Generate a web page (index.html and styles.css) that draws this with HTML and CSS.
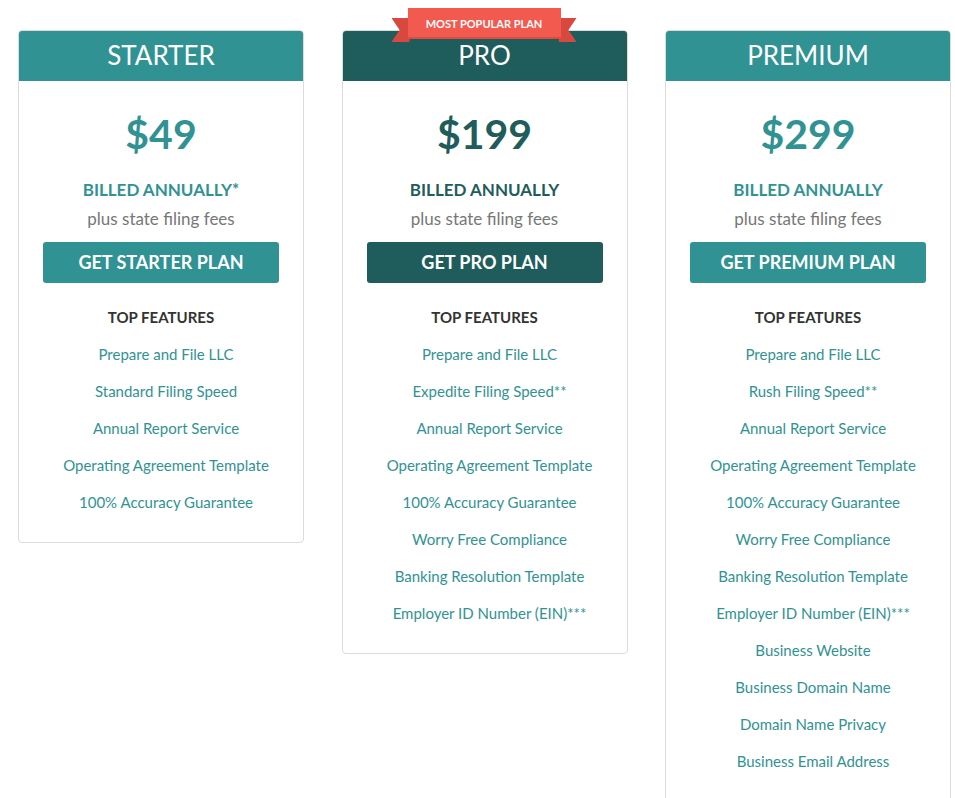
FILE: index.html
```html
<!DOCTYPE html>
<html>
<head>
<meta charset="utf-8">
<link rel="stylesheet" href="styles.css">
</head>
<body>
<div class="plans">
  <div class="card">
    <div class="card-head starter">STARTER</div>
    <div class="card-body">
      <div class="price teal">$49</div>
      <div class="billed teal">BILLED ANNUALLY*</div>
      <div class="fees">plus state filing fees</div>
      <a class="btn btn-teal">GET STARTER PLAN</a>
      <div class="top">TOP FEATURES</div>
      <ul class="features">
        <li>Prepare and File LLC</li>
        <li>Standard Filing Speed</li>
        <li>Annual Report Service</li>
        <li>Operating Agreement Template</li>
        <li>100% Accuracy Guarantee</li>
      </ul>
    </div>
  </div>
  <div class="card popular">
    <div class="ribbon">
      <span class="tail tail-left"></span>
      <span class="tail tail-right"></span>
      <span class="ribbon-main">MOST POPULAR PLAN</span>
    </div>
    <div class="card-head pro">PRO</div>
    <div class="card-body">
      <div class="price dark">$199</div>
      <div class="billed dark">BILLED ANNUALLY</div>
      <div class="fees">plus state filing fees</div>
      <a class="btn btn-dark">GET PRO PLAN</a>
      <div class="top">TOP FEATURES</div>
      <ul class="features">
        <li>Prepare and File LLC</li>
        <li>Expedite Filing Speed**</li>
        <li>Annual Report Service</li>
        <li>Operating Agreement Template</li>
        <li>100% Accuracy Guarantee</li>
        <li>Worry Free Compliance</li>
        <li>Banking Resolution Template</li>
        <li>Employer ID Number (EIN)***</li>
      </ul>
    </div>
  </div>
  <div class="card">
    <div class="card-head starter">PREMIUM</div>
    <div class="card-body">
      <div class="price teal">$299</div>
      <div class="billed teal">BILLED ANNUALLY</div>
      <div class="fees">plus state filing fees</div>
      <a class="btn btn-teal">GET PREMIUM PLAN</a>
      <div class="top">TOP FEATURES</div>
      <ul class="features">
        <li>Prepare and File LLC</li>
        <li>Rush Filing Speed**</li>
        <li>Annual Report Service</li>
        <li>Operating Agreement Template</li>
        <li>100% Accuracy Guarantee</li>
        <li>Worry Free Compliance</li>
        <li>Banking Resolution Template</li>
        <li>Employer ID Number (EIN)***</li>
        <li>Business Website</li>
        <li>Business Domain Name</li>
        <li>Domain Name Privacy</li>
        <li>Business Email Address</li>
      </ul>
    </div>
  </div>
</div>
</body>
</html>
```
FILE: styles.css
```css
html, body {
  margin: 0;
  padding: 0;
  background: #fff;
}
body {
  font-family: Lato, "Open Sans", sans-serif;
  color: #333;
}
.plans {
  display: flex;
  align-items: flex-start;
  gap: 37.5px;
  padding: 30px 0 0 18px;
}
.card {
  position: relative;
  width: 284px;
  border: 1px solid #dcdcdc;
  border-radius: 4px;
  text-align: center;
}
.card-head {
  height: 50px;
  line-height: 49px;
  font-size: 26px;
  color: #fff;
  border-radius: 3px 3px 0 0;
}
.starter { background: #319294; }
.pro { background: #1f5c5c; }
.card-body {
  padding: 26px 24px 30px;
}
.price {
  font-size: 41px;
  font-weight: 700;
  line-height: 54px;
}
.teal { color: #319294; }
.dark { color: #1f5c5c; }
.billed {
  margin-top: 18px;
  font-size: 17px;
  font-weight: 700;
  line-height: 22px;
}
.fees {
  margin-top: 7px;
  font-size: 17px;
  color: #777;
  line-height: 22px;
}
.btn {
  display: block;
  margin-top: 12px;
  height: 41px;
  line-height: 41px;
  border-radius: 3px;
  color: #fff;
  font-size: 18px;
  font-weight: 700;
}
.btn-teal { background: #319294; }
.btn-dark { background: #1f5c5c; }
.top {
  margin-top: 24px;
  font-size: 15px;
  font-weight: 700;
  color: #333;
  line-height: 20px;
}
.features {
  list-style: none;
  margin: 0;
  padding: 0 0 0 10px;
}
.features li {
  margin-top: 17px;
  font-size: 15px;
  line-height: 20px;
  color: #319294;
}
.ribbon {
  position: absolute;
  left: 65px;
  top: -23px;
  width: 153px;
  height: 31px;
}
.ribbon-main {
  position: absolute;
  inset: 0;
  background: #f25a50;
  color: #fff;
  font-size: 11px;
  font-weight: 700;
  line-height: 31px;
  text-align: center;
  box-shadow: inset 0 -2px 0 #e04a40;
}
.tail {
  position: absolute;
  top: 10px;
  width: 18px;
  height: 24px;
  background: #d8483f;
}
.tail-left {
  left: -16px;
  clip-path: polygon(0 0, 100% 0, 100% 100%, 0 100%, 45% 50%);
}
.tail-right {
  right: -16px;
  clip-path: polygon(0 0, 100% 0, 55% 50%, 100% 100%, 0 100%);
}
```
